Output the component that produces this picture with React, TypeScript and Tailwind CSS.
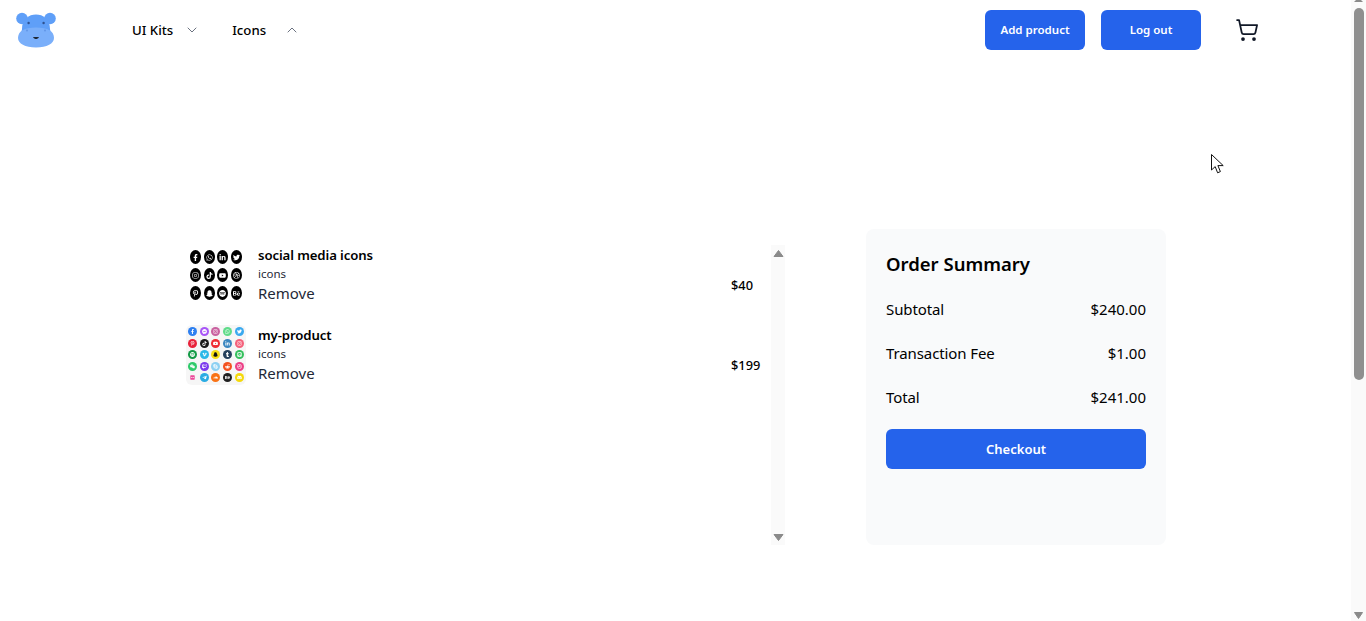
import { ChevronDown, ChevronUp, ShoppingCart } from "lucide-react";
import type { ComponentType, ReactNode } from "react";
import {
  FaFacebookF, FaWhatsapp, FaLinkedinIn, FaTwitter, FaInstagram, FaTiktok, FaYoutube, FaPinterestP,
  FaSnapchatGhost, FaSpotify, FaFacebookMessenger, FaVimeoV, FaTumblr, FaLine, FaWeixin, FaTwitch,
  FaSkype, FaRedditAlien, FaDribbble, FaFlickr, FaTelegramPlane, FaSoundcloud, FaBehance, FaDiscord,
} from "react-icons/fa";

const font = { fontFamily: '"Noto Sans", "Open Sans", sans-serif' };
type Ic = ComponentType<{ size?: number; color?: string }>;

const mono: Ic[] = [
  FaFacebookF, FaWhatsapp, FaLinkedinIn, FaTwitter,
  FaInstagram, FaTiktok, FaYoutube, FaDribbble,
  FaPinterestP, FaSnapchatGhost, FaSpotify, FaBehance,
];

const colored: [Ic, string][] = [
  [FaFacebookF, "#2d7ff0"], [FaFacebookMessenger, "#a855f7"], [FaInstagram, "#c9609f"], [FaWhatsapp, "#5fdc8a"], [FaTwitter, "#3aa9ef"],
  [FaPinterestP, "#e8213a"], [FaTiktok, "#1a1a1a"], [FaYoutube, "#ef2c34"], [FaLinkedinIn, "#3a86bf"], [FaInstagram, "#f4607a"],
  [FaSpotify, "#129a45"], [FaVimeoV, "#2bb8e8"], [FaSnapchatGhost, "#f7e017"], [FaTumblr, "#25405c"], [FaLine, "#34c05c"],
  [FaWeixin, "#2fca6a"], [FaTwitch, "#7c3aed"], [FaSkype, "#8cd0f2"], [FaRedditAlien, "#f4511e"], [FaDribbble, "#ec3f86"],
  [FaFlickr, "#f6f6f6"], [FaTelegramPlane, "#2aace3"], [FaSoundcloud, "#f97316"], [FaBehance, "#1f1f1f"], [FaDiscord, "#f5d90a"],
];

function MonoThumb() {
  return (
    <div className="w-[60px] h-[60px] shrink-0 bg-white grid grid-cols-4 content-center justify-items-center gap-y-[4px] px-[3px]">
      {mono.map((I, i) => (
        <div key={i} className="w-[11px] h-[14px] rounded-[50%] bg-black flex items-center justify-center">
          <I size={7} color="#ffffff" />
        </div>
      ))}
    </div>
  );
}

function ColorThumb() {
  return (
    <div className="w-[60px] h-[60px] shrink-0 bg-[#f6f6f6] rounded-md grid grid-cols-5 content-center justify-items-center gap-y-[2.5px] px-[1px] pb-[1px]">
      {colored.map(([I, c], i) => (
        <div key={i} className="w-[9px] h-[9px] rounded-full flex items-center justify-center" style={{ backgroundColor: c }}>
          <I size={5} color={i === 20 ? "#ec4899" : i === 12 ? "#111111" : "#ffffff"} />
        </div>
      ))}
    </div>
  );
}

function Hippo() {
  return (
    <svg width="40" height="36" viewBox="0 0 40 36" className="shrink-0">
      <circle cx="6" cy="6.5" r="5.8" fill="#5f9ff8" />
      <circle cx="34" cy="6.5" r="5.8" fill="#5f9ff8" />
      <path d="M6 17C6 7 13 2.5 20 2.5S34 7 34 17C34 19 35 20 35 22H5C5 20 6 19 6 17Z" fill="#5f9ff8" />
      <path d="M2 26C2 19.5 8 15.5 20 15.5S38 19.5 38 26C38 31.5 31 35.5 20 35.5S2 31.5 2 26Z" fill="#7aaffa" />
      <circle cx="12.6" cy="11" r="1.2" fill="#2f5290" />
      <circle cx="27.6" cy="11" r="1.2" fill="#2f5290" />
      <circle cx="11" cy="18.5" r="0.9" fill="#5f93e6" />
      <circle cx="29" cy="18.5" r="0.9" fill="#5f93e6" />
      <path d="M17 25C18.5 27.8 21.5 27.8 23 25Z" fill="#1f2937" />
    </svg>
  );
}

function Row({ thumb, name, price }: { thumb: ReactNode; name: string; price: string }) {
  return (
    <div className="flex items-start h-[60px]">
      {thumb}
      <div className="ml-[12px] flex-1 flex flex-col">
        <div className="text-[13.2px] tracking-[-0.1px] leading-[20px] font-semibold text-black">{name}</div>
        <div className="text-[11.5px] leading-[16px] mt-[1px] text-[#1f2937]">icons</div>
        <div className="text-[15px] leading-[20px] mt-[1px] text-[#1f2937]">Remove</div>
      </div>
      <div className="w-[41px] self-center mt-[22px] text-[12.8px] font-medium text-black">{price}</div>
    </div>
  );
}

function SummaryLine({ label, value }: { label: string; value: string }) {
  return (
    <div className="flex justify-between text-[15px] leading-[24px] text-black h-[44px]">
      <span className="tracking-[-0.1px]">{label}</span>
      <span>{value}</span>
    </div>
  );
}

export default function App() {
  return (
    <div className="relative flex h-[621px] w-[1366px] overflow-hidden bg-white" style={font}>
      <div className="flex-1 flex flex-col">
        <header className="h-[60px] flex items-center pl-[16px] pr-[92px]">
          <Hippo />
          <nav className="ml-[76px] mt-[1px] flex items-center text-[13.2px] font-medium text-black">
            <span>UI Kits</span>
            <ChevronDown size={16} strokeWidth={1.5} color="#6b7280" className="ml-[11px]" />
            <span className="ml-[32px]">Icons</span>
            <ChevronUp size={16} strokeWidth={1.5} color="#6b7280" className="ml-[18px]" />
          </nav>
          <div className="ml-auto flex items-center">
            <button className="w-[100px] h-[40px] rounded-md bg-[#2563eb] text-white text-[11.5px] font-semibold">Add product</button>
            <button className="ml-[16px] w-[100px] h-[40px] rounded-md bg-[#2563eb] text-white text-[11.5px] font-semibold">Log out</button>
            <ShoppingCart size={24} strokeWidth={1.75} color="#111827" className="ml-[34px]" />
          </div>
        </header>

        <main className="flex items-start mt-[169px] pl-[186px]">
          <section className="flex w-[599px] h-[300px] mt-[16px]">
            <div className="flex-1 flex flex-col gap-[20px]">
              <Row thumb={<MonoThumb />} name="social media icons" price="$40" />
              <Row thumb={<ColorThumb />} name="my-product" price="$199" />
            </div>
            <div className="w-[14px] ml-[-1px] h-[300px] bg-[#fafafa] flex flex-col justify-between items-center">
              <svg width="14" height="14" viewBox="0 0 14 14"><path d="M3 11.5L7.5 5.5L12 11.5Z" fill="#8a8a8a" stroke="#8a8a8a" strokeLinejoin="round" /></svg>
              <svg width="14" height="14" viewBox="0 0 14 14"><path d="M3 3.5L12 3.5L7.5 9.5Z" fill="#8a8a8a" stroke="#8a8a8a" strokeLinejoin="round" /></svg>
            </div>
          </section>

          <aside className="ml-[81px] w-[300px] h-[316px] rounded-lg bg-[#f9fafb] p-[20px]">
            <h2 className="text-[18.5px] leading-[30px] font-semibold text-black">Order Summary</h2>
            <div className="mt-[18px]">
              <SummaryLine label="Subtotal" value="$240.00" />
              <SummaryLine label="Transaction Fee" value="$1.00" />
              <SummaryLine label="Total" value="$241.00" />
            </div>
            <button className="w-full h-[40px] pt-[1px] rounded-md bg-[#2563eb] text-white text-[13px] font-semibold">Checkout</button>
          </aside>
        </main>
      </div>

      <div className="w-[15px] h-full bg-[#fafafa] flex flex-col items-center shrink-0">
        <svg width="15" height="8" viewBox="0 0 15 8" className="shrink-0"><path d="M3 2H12L10 0H5Z" fill="#8a8a8a" /></svg>
        <div className="w-[10px] h-[372px] bg-[#8f8f8f] rounded-full" />
        <div className="flex-1" />
        <svg width="15" height="14" viewBox="0 0 15 14" className="shrink-0"><path d="M3.5 5.5H11.5L7.5 11.5Z" fill="#8a8a8a" stroke="#8a8a8a" strokeLinejoin="round" /></svg>
      </div>

      <svg width="14" height="21" viewBox="0 0 14 21" className="absolute left-[1211px] top-[154px]">
        <path d="M0.5 0.5V16L4.2 12.6L6.6 18.8L9.4 17.6L6.9 11.6H12.2Z" fill="#ffffff" stroke="#111111" strokeWidth="1" strokeLinejoin="round" />
      </svg>
    </div>
  );
}
